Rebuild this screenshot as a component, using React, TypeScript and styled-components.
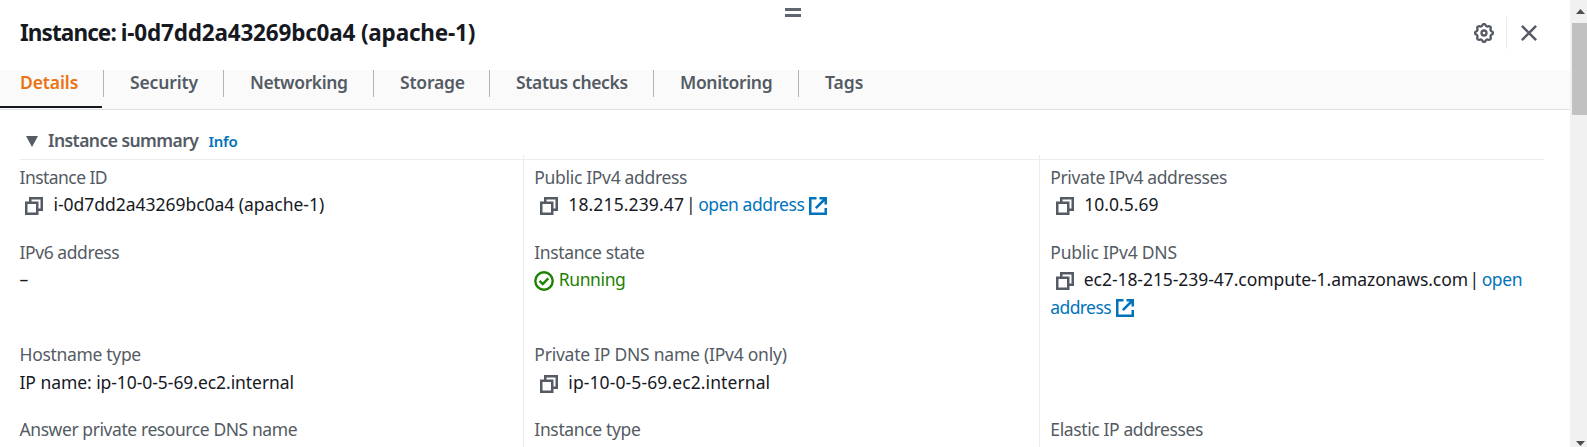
import React from "react";
import styled, { createGlobalStyle } from "styled-components";

const GlobalStyle = createGlobalStyle`
  * { box-sizing: border-box; }
  body {
    margin: 0;
    background: #fff;
    color: #16191f;
    font-family: "Noto Sans", "Open Sans", sans-serif;
    font-size: 17.5px;
    line-height: 27.5px;
    overflow: hidden;
  }
`;

const Window = styled.div`
  display: flex;
  height: 447px;
  overflow: hidden;
`;

const Panel = styled.main`
  flex: 1;
  min-width: 0;
  display: flex;
  flex-direction: column;
`;

const DragHandle = styled.div`
  width: 16px;
  height: 9px;
  margin: 8px auto 0;
  border-top: 3px solid #60666f;
  border-bottom: 3px solid #60666f;
  transform: translateX(8px);
`;

const Header = styled.header`
  display: flex;
  justify-content: space-between;
  align-items: center;
  height: 53px;
  padding: 0 33px 21px 20px;
`;

const Title = styled.h1`
  margin: 0;
  font-size: 22.5px;
  line-height: 32px;
  font-weight: 700;
  letter-spacing: -0.19px;
`;

const TitlePrefix = styled.span`
  letter-spacing: -0.9px;
`;

const Actions = styled.div`
  display: flex;
  align-items: center;
  height: 32px;
`;

const ActionDivider = styled.span`
  width: 1px;
  height: 32px;
  margin: 0 14px 0 12px;
  background: #eaeded;
`;

const TabBar = styled.nav`
  display: flex;
  flex: none;
  height: 40px;
  background: #fafafa;
  border-bottom: 1px solid #e2e4e4;
`;

const Tab = styled.div<{ $active?: boolean; $width: number; $track: number }>`
  display: flex;
  width: ${(p) => p.$width}px;
  height: 38px;
  padding-left: ${(p) => (p.$active ? 20 : 26)}px;
  border-bottom: ${(p) => (p.$active ? "2px solid #16191f" : "none")};
  margin-right: ${(p) => (p.$active ? 1 : 0)}px;
  color: ${(p) => (p.$active ? "#ec7211" : "#545b64")};
  font-weight: 600;
  line-height: 25px;
  letter-spacing: ${(p) => p.$track}px;
`;

const TabDivider = styled.span`
  width: 1px;
  height: 27px;
  background: #aab7b8;
`;

const SectionHeader = styled.section`
  display: flex;
  align-items: baseline;
  flex: none;
  height: 50px;
  margin: 0 26px 0 20px;
  padding: 17px 0 0 6px;
  border-bottom: 1px solid #eaeded;
  color: #545b64;
`;

const SectionTitle = styled.h2`
  margin: 0 10px 0 10px;
  font-size: 17.5px;
  font-weight: 600;
  letter-spacing: -0.55px;
`;

const InfoLink = styled.a`
  color: #0073bb;
  font-size: 15px;
  font-weight: 600;
  letter-spacing: -0.2px;
`;

const Columns = styled.div`
  display: grid;
  grid-template-columns: 523px 516px 1fr;
  flex: 1;
  min-height: 0;
  margin-top: -5px;
`;

const Column = styled.div<{ $first?: boolean }>`
  display: flex;
  flex-direction: column;
  gap: 20px;
  padding: 8.5px ${(p) => (p.$first ? 0 : 10)}px 0 ${(p) => (p.$first ? 19.5 : 10.3)}px;
  border-left: ${(p) => (p.$first ? "none" : "1px solid #eaeded")};
  white-space: nowrap;
`;

const Field = styled.div<{ $lines?: number }>`
  height: ${(p) => (p.$lines || 2) * 27.5}px;
`;

const Label = styled.div<{ $track: number }>`
  color: #545b64;
  letter-spacing: ${(p) => p.$track}px;
`;

const Value = styled.div<{ $track?: number }>`
  display: flex;
  height: 27.5px;
  letter-spacing: ${(p) => p.$track || 0}px;
`;

const Text = styled.span<{ $track?: number; $gap?: number }>`
  margin-left: ${(p) => p.$gap || 0}px;
  letter-spacing: ${(p) => p.$track || 0}px;
`;

const Link = styled.a<{ $track: number; $gap?: number }>`
  margin-left: ${(p) => p.$gap || 0}px;
  color: #0073bb;
  letter-spacing: ${(p) => p.$track}px;
`;

const Running = styled.span`
  margin-left: 5px;
  color: #1d8102;
  letter-spacing: -0.4px;
`;

const Icon = styled.svg<{ $left?: number; $top?: number }>`
  display: block;
  flex: none;
  fill: none;
  margin: ${(p) => p.$top || 0}px 0 0 ${(p) => p.$left || 0}px;
`;

const ScrollTrack = styled.aside`
  display: flex;
  flex-direction: column;
  align-items: center;
  width: 17px;
  background: #f1f1f1;
`;

const ScrollThumb = styled.div`
  width: 15px;
  height: 92px;
  margin: 9px 0 auto 2px;
  background: #c1c1c1;
`;

const CopyIcon = () => (
  <Icon $left={5.5} $top={6} width="18" height="18" viewBox="0 0 18 18" stroke="#545b64" strokeWidth="2.5">
    <path d="M1.25 5.75h11v11h-11z" />
    <path d="M5.25 5.5V1.25h11.5v11.5H12.5" />
  </Icon>
);

const ExternalIcon = () => (
  <Icon $left={5} $top={5.5} width="18" height="18" viewBox="0 0 18 18" stroke="#0073bb" strokeWidth="2.5">
    <path d="M7.5 1.25H1.25v15.5h15.5V11" />
    <path d="M10.5 1.25h6.25V7.5M16.5 1.5 6.8 11.2" />
  </Icon>
);

const CheckIcon = () => (
  <Icon $left={-0.5} $top={5} width="20" height="20" viewBox="0 0 20 20" stroke="#1d8102" strokeWidth="2.4">
    <circle cx="10" cy="10" r="8.7" />
    <path d="m5.6 9.8 3.1 3.2 5.6-5.7" />
  </Icon>
);

const gearPath = (() => {
  const points: string[] = [];
  for (let i = 0; i < 80; i++) {
    const a = (i / 80) * Math.PI * 2;
    const wave = Math.max(-1, Math.min(1, 1.6 * Math.cos(8 * a)));
    const r = 8.05 + 0.8 * wave;
    points.push(`${(10 + r * Math.cos(a)).toFixed(2)} ${(10 + r * Math.sin(a)).toFixed(2)}`);
  }
  return `M${points.join("L")}Z`;
})();

const GearIcon = () => (
  <Icon width="20" height="20" viewBox="0 0 20 20" stroke="#545b64" strokeWidth="2.3" strokeLinejoin="round">
    <path d={gearPath} />
    <circle cx="10" cy="10" r="2.5" />
  </Icon>
);

const CloseIcon = () => (
  <Icon width="16" height="16" viewBox="0 0 16 16" stroke="#545b64" strokeWidth="2.5">
    <path d="m.9.9 14.2 14.2M15.1.9.9 15.1" />
  </Icon>
);

const tabs = [
  { name: "Details", width: 102, track: -0.1 },
  { name: "Security", width: 119, track: -0.13 },
  { name: "Networking", width: 149, track: -0.38 },
  { name: "Storage", width: 115, track: -0.2 },
  { name: "Status checks", width: 163, track: -0.35 },
  { name: "Monitoring", width: 144, track: -0.35 },
  { name: "Tags", width: 90, track: 0 },
];

export default function App() {
  return (
    <Window>
      <GlobalStyle />
      <Panel>
        <DragHandle />
        <Header>
          <Title><TitlePrefix>Instance: </TitlePrefix>i-0d7dd2a43269bc0a4 (apache-1)</Title>
          <Actions>
            <GearIcon />
            <ActionDivider />
            <CloseIcon />
          </Actions>
        </Header>
        <TabBar>
          {tabs.map((t, i) => (
            <React.Fragment key={t.name}>
              <Tab $active={i === 0} $width={t.width} $track={t.track}>{t.name}</Tab>
              {i < tabs.length - 1 && <TabDivider />}
            </React.Fragment>
          ))}
        </TabBar>
        <SectionHeader>
          <Icon width="12" height="11" viewBox="0 0 12 11">
            <path d="M0 0h12L6 11z" fill="#545b64" />
          </Icon>
          <SectionTitle>Instance summary</SectionTitle>
          <InfoLink>Info</InfoLink>
        </SectionHeader>
        <Columns>
          <Column $first>
            <Field>
              <Label $track={-0.55}>Instance ID</Label>
              <Value><CopyIcon /><Text $gap={10.5} $track={-0.03}>i-0d7dd2a43269bc0a4 (apache-1)</Text></Value>
            </Field>
            <Field $lines={3}>
              <Label $track={-0.42}>IPv6 address</Label>
              <Value>–</Value>
            </Field>
            <Field>
              <Label $track={-0.32}>Hostname type</Label>
              <Value $track={-0.06}>IP name: ip-10-0-5-69.ec2.internal</Value>
            </Field>
            <Label $track={-0.42}>Answer private resource DNS name</Label>
          </Column>
          <Column>
            <Field>
              <Label $track={-0.32}>Public IPv4 address</Label>
              <Value>
                <CopyIcon />
                <Text $gap={10.5} $track={0.12}>18.215.239.47</Text>
                <Text $gap={2}>|</Text>
                <Link $gap={2.5} $track={-0.43}>open address</Link>
                <ExternalIcon />
              </Value>
            </Field>
            <Field $lines={3}>
              <Label $track={-0.38}>Instance state</Label>
              <Value><CheckIcon /><Running>Running</Running></Value>
            </Field>
            <Field>
              <Label $track={-0.24}>Private IP DNS name (IPv4 only)</Label>
              <Value><CopyIcon /><Text $gap={10.5} $track={0.1}>ip-10-0-5-69.ec2.internal</Text></Value>
            </Field>
            <Label $track={-0.35}>Instance type</Label>
          </Column>
          <Column>
            <Field>
              <Label $track={-0.37}>Private IPv4 addresses</Label>
              <Value><CopyIcon /><Text $gap={10.5}>10.0.5.69</Text></Value>
            </Field>
            <Field $lines={3}>
              <Label $track={-0.22}>Public IPv4 DNS</Label>
              <Value>
                <CopyIcon />
                <Text $gap={10} $track={-0.06}>ec2-18-215-239-47.compute-1.amazonaws.com</Text>
                <Text $gap={1.5}>|</Text>
                <Link $gap={2.5} $track={-0.4}>open</Link>
              </Value>
              <Value><Link $track={-0.6}>address</Link><ExternalIcon /></Value>
            </Field>
            <Field />
            <Label $track={-0.38}>Elastic IP addresses</Label>
          </Column>
        </Columns>
      </Panel>
      <ScrollTrack>
        <Icon $left={3} $top={9} width="9" height="5" viewBox="0 0 9 5"><path d="M0 5h9L4.5 0z" fill="#505050" /></Icon>
        <ScrollThumb />
        <Icon $left={3} width="9" height="6" viewBox="0 0 9 6"><path d="M0 0h9L4.5 5z" fill="#505050" /></Icon>
      </ScrollTrack>
    </Window>
  );
}
